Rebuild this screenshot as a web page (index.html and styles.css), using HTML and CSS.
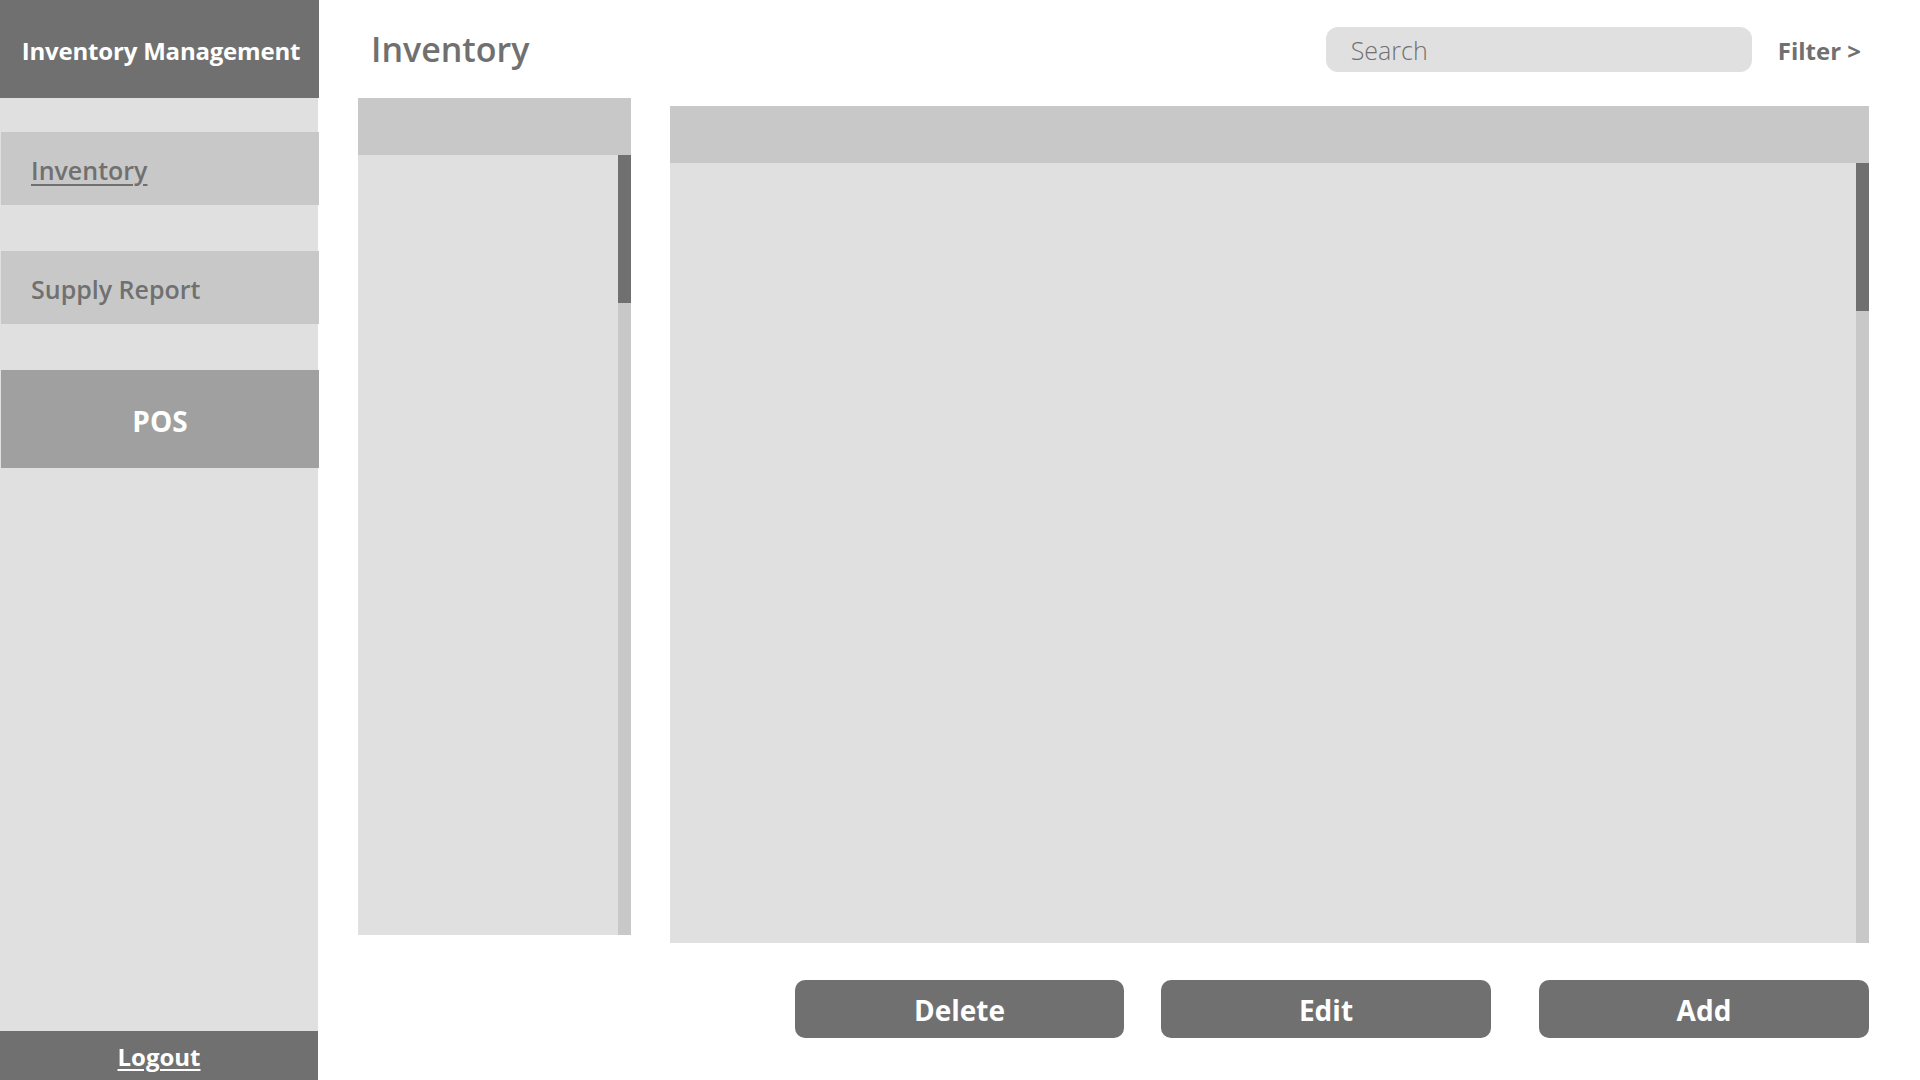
FILE: index.html
```html
<!DOCTYPE html>
<html lang="en">
<head>
<meta charset="utf-8">
<title>Inventory Management</title>
<link rel="stylesheet" href="styles.css">
</head>
<body>
<div class="app">
  <aside class="sidebar">
    <div class="brand">Inventory Management</div>
    <nav class="nav">
      <a class="nav-item nav-item--active" href="#">Inventory</a>
      <a class="nav-item" href="#">Supply Report</a>
      <a class="nav-pos" href="#">POS</a>
    </nav>
    <a class="logout" href="#">Logout</a>
  </aside>
  <main class="main">
    <header class="topbar">
      <h1 class="title">Inventory</h1>
      <div class="search">Search</div>
      <div class="filter">Filter &gt;</div>
    </header>
    <section class="content">
      <div class="panel panel--list">
        <div class="panel-head"></div>
        <div class="panel-body">
          <div class="panel-fill"></div>
          <div class="scroll"><div class="thumb"></div></div>
        </div>
      </div>
      <div class="panel panel--table">
        <div class="panel-head"></div>
        <div class="panel-body">
          <div class="panel-fill"></div>
          <div class="scroll"><div class="thumb"></div></div>
        </div>
      </div>
    </section>
    <div class="actions">
      <button class="btn">Delete</button>
      <button class="btn">Edit</button>
      <button class="btn btn--add">Add</button>
    </div>
  </main>
</div>
</body>
</html>
```

FILE: styles.css
```css
* { box-sizing: border-box; }
html, body { margin: 0; padding: 0; }
body {
  font-family: "Open Sans", "Noto Sans", sans-serif;
  background: #ffffff;
  color: #707070;
  width: 1920px;
  height: 1080px;
  overflow: hidden;
}
.app {
  display: flex;
  height: 1080px;
}
.sidebar {
  width: 318px;
  flex: none;
  background: #e0e0e0;
  display: flex;
  flex-direction: column;
}
.brand {
  height: 98px;
  width: 319px;
  background: #707070;
  color: #ffffff;
  font-weight: 700;
  font-size: 24px;
  display: flex;
  align-items: center;
  justify-content: center;
  padding-top: 3px;
  padding-left: 3px;
  letter-spacing: -0.2px;
}
.nav {
  display: flex;
  flex-direction: column;
  margin-top: 34px;
  gap: 46px;
}
.nav-item {
  display: flex;
  align-items: center;
  height: 73px;
  width: 318px;
  margin-left: 1px;
  padding-left: 30px;
  padding-top: 2px;
  background: #c8c8c8;
  color: #707070;
  font-weight: 600;
  font-size: 25px;
  text-decoration: none;
}
.nav-item--active {
  text-decoration: underline;
  text-decoration-thickness: 2px;
  text-underline-offset: 4px;
}
.nav-pos {
  display: flex;
  align-items: center;
  justify-content: center;
  height: 98px;
  width: 318px;
  margin-left: 1px;
  padding-top: 4px;
  background: #a0a0a0;
  color: #ffffff;
  font-weight: 700;
  font-size: 28px;
  text-decoration: none;
}
.logout {
  margin-top: auto;
  height: 49px;
  background: #707070;
  color: #ffffff;
  font-weight: 700;
  font-size: 24px;
  display: flex;
  align-items: center;
  justify-content: center;
  padding-top: 2px;
  text-decoration: underline;
  text-decoration-thickness: 2px;
  text-underline-offset: 3px;
}
.main {
  flex: 1;
  display: flex;
  flex-direction: column;
}
.topbar {
  height: 98px;
  display: flex;
  align-items: center;
  padding-left: 53px;
  padding-right: 59px;
  padding-top: 2px;
}
.title {
  margin: 0;
  font-size: 34px;
  font-weight: 600;
  color: #707070;
  line-height: 1;
  margin-top: -2px;
}
.search {
  margin-left: auto;
  width: 426px;
  height: 45px;
  margin-top: -2px;
  border-radius: 12px;
  background: #e0e0e0;
  color: #707070;
  font-size: 25px;
  font-weight: 300;
  display: flex;
  align-items: center;
  padding-left: 25px;
  padding-top: 2px;
}
.filter {
  margin-left: 26px;
  font-size: 24px;
  font-weight: 700;
  color: #707070;
}
.content {
  display: flex;
  align-items: flex-start;
  padding-left: 40px;
}
.panel {
  display: flex;
  flex-direction: column;
  height: 837px;
}
.panel--list {
  width: 273px;
}
.panel--table {
  width: 1199px;
  margin-left: 39px;
  margin-top: 8px;
}
.panel-head {
  height: 57px;
  background: #c8c8c8;
}
.panel-body {
  flex: 1;
  display: flex;
}
.panel-fill {
  flex: 1;
  background: #e0e0e0;
}
.scroll {
  width: 13px;
  background: #c8c8c8;
}
.thumb {
  height: 148px;
  background: #707070;
}
.actions {
  display: flex;
  margin-top: 37px;
  padding-left: 477px;
  gap: 37px;
}
.btn {
  width: 330px;
  height: 58px;
  border: none;
  border-radius: 10px;
  background: #707070;
  color: #ffffff;
  font-family: "Open Sans", "Noto Sans", sans-serif;
  font-size: 28px;
  font-weight: 700;
  padding: 0;
  padding-top: 2px;
}
.btn:first-child { width: 329px; }
.btn--add { margin-left: 11px; }
```
